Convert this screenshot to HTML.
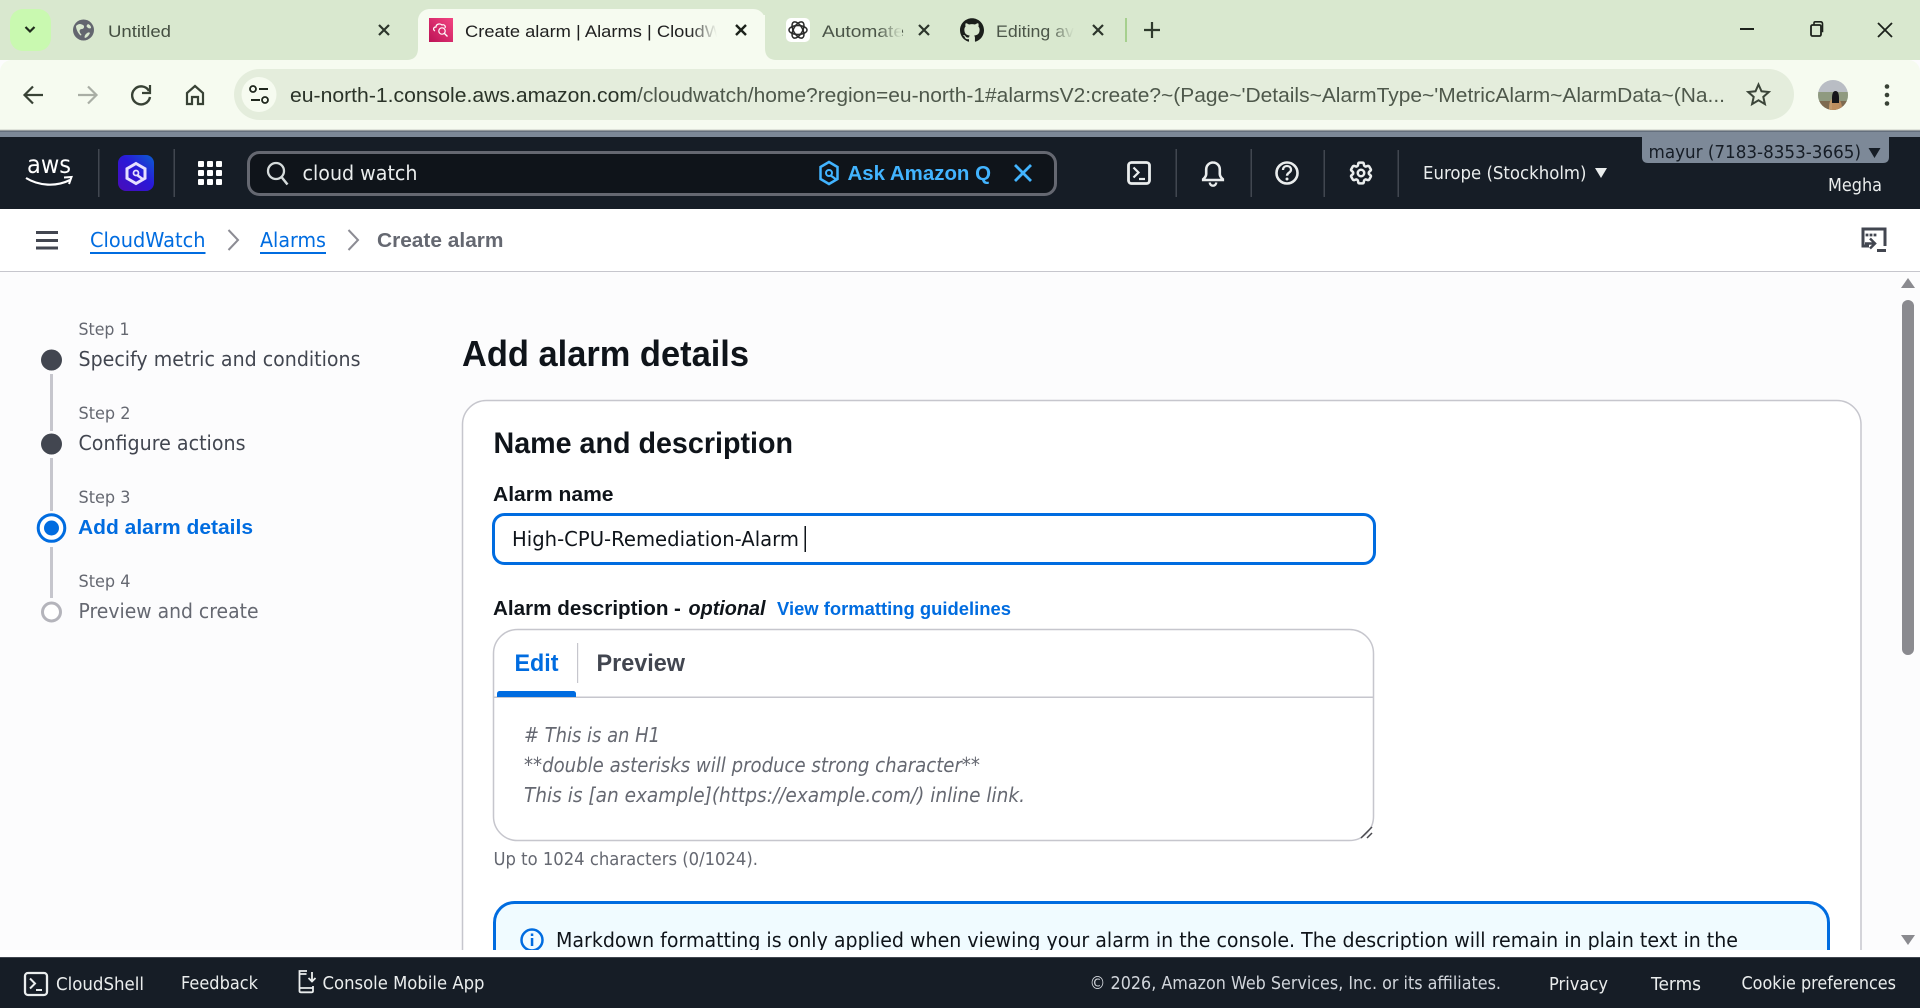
<!DOCTYPE html>
<html lang="en">
<head>
<meta charset="utf-8">
<title>Create alarm | Alarms | CloudWatch</title>
<style>
html,body{margin:0;padding:0;width:1920px;height:1008px;overflow:hidden;background:#fcfcfd}
svg{display:block}
text{white-space:pre}
.c{font-family:"Liberation Sans",sans-serif}
.a{font-family:"DejaVu Sans","Liberation Sans",sans-serif;fill:currentColor;-webkit-text-stroke:.22px}
.b{font-family:"Liberation Sans",sans-serif;font-weight:700}
</style>
</head>
<body>
<svg width="1920" height="1008" viewBox="0 0 1920 1008" xmlns="http://www.w3.org/2000/svg">
<defs>
<linearGradient id="fa" x1="0" x2="1" y1="0" y2="0"><stop offset="0" stop-color="#f6fbf0" stop-opacity="0"/><stop offset="1" stop-color="#f6fbf0"/></linearGradient>
<linearGradient id="fb" x1="0" x2="1" y1="0" y2="0"><stop offset="0" stop-color="#d9e8cf" stop-opacity="0"/><stop offset="1" stop-color="#d9e8cf"/></linearGradient>
<linearGradient id="pink" x1="1" x2="0" y1="0" y2="1"><stop offset="0" stop-color="#f34482"/><stop offset="1" stop-color="#bc1356"/></linearGradient>
<linearGradient id="qg" x1="1" x2="0" y1="0" y2="1"><stop offset="0" stop-color="#0a5fd0"/><stop offset=".45" stop-color="#2a18d8"/><stop offset="1" stop-color="#4a0cb8"/></linearGradient>
<clipPath id="avc"><circle cx="1833" cy="95" r="15"/></clipPath>
<clipPath id="main"><rect x="0" y="272" width="1920" height="678"/></clipPath>
</defs>

<!-- Tab strip -->
<rect x="0" y="0" width="1920" height="60" fill="#d9e8cf"/>
<rect x="10" y="9" width="41" height="42" rx="13" fill="#c9f9b0"/>
<path d="M25.5 27l4.5 4.5 4.5-4.5" fill="none" stroke="#1f2a1c" stroke-width="2.2"/>

<!-- Tab 1 -->
<circle cx="83.5" cy="30" r="10.5" fill="#63666f"/>
<path d="M76 26c3-3 5-2 7-1 2 1 1 4-1 4-3 0-3 3-1 5 1 1 0 2-1 1-2-2-4-6-4-9zM88 24c2 1 3 2 3 4-2 1-3 0-4-1-1-1 0-2 1-3zM86 34c2-2 3-2 4-1-1 2-2 4-5 5-1-1 0-3 1-4z" fill="#d9e8cf"/>
<text class="c" x="108" y="37" font-size="17" fill="#454f42" textLength="63" lengthAdjust="spacingAndGlyphs">Untitled</text>
<path d="M379 25l10 10M389 25l-10 10" stroke="#2c352b" stroke-width="2.2"/>

<!-- Active tab -->
<path d="M406 60c8 0 12-4 12-12V21c0-7 5-12 12-12h323c7 0 12 5 12 12v27c0 8 4 12 12 12z" fill="#f6fbf0"/>
<rect x="429" y="18" width="24" height="24" fill="url(#pink)"/>
<path d="M435 31c-2-1-2-4 1-4 0-3 4-4 6-2 2-1 4 1 3 3" fill="none" stroke="#fff" stroke-width="1.2"/>
<circle cx="442" cy="31" r="3.2" fill="none" stroke="#fff" stroke-width="1.2"/><path d="M444.5 33.5l3 3" stroke="#fff" stroke-width="1.3"/>
<text class="c" x="465" y="37" font-size="17" fill="#1f1f1f" textLength="291" lengthAdjust="spacingAndGlyphs">Create alarm | Alarms | CloudWatch</text>
<rect x="690" y="15" width="27" height="30" fill="url(#fa)"/>
<rect x="717" y="15" width="48" height="30" fill="#f6fbf0"/>
<path d="M736 25l10 10M746 25l-10 10" stroke="#1c211b" stroke-width="2.4"/>

<!-- Automate tab -->
<rect x="786" y="18" width="24" height="24" rx="5" fill="#fff"/>
<g fill="none" stroke="#2b2b2b" stroke-width="1.5">
<ellipse cx="798" cy="30" rx="9" ry="4.500"/><ellipse cx="798" cy="30" rx="9" ry="4.500" transform="rotate(60 798 30)"/><ellipse cx="798" cy="30" rx="9" ry="4.500" transform="rotate(-60 798 30)"/>
</g>
<text class="c" x="822" y="37" font-size="17" fill="#4b5548" textLength="82" lengthAdjust="spacingAndGlyphs">Automate</text>
<rect x="878" y="15" width="24" height="30" fill="url(#fb)"/>
<path d="M919 25l10 10M929 25l-10 10" stroke="#2c352b" stroke-width="2.2"/>

<!-- GitHub tab -->
<path transform="translate(960 18)" fill="#1b1f1b" d="M12 .297c-6.63 0-12 5.373-12 12 0 5.303 3.438 9.8 8.205 11.385.6.113.82-.258.82-.577 0-.285-.01-1.04-.015-2.04-3.338.724-4.042-1.61-4.042-1.61C4.422 18.07 3.633 17.7 3.633 17.7c-1.087-.744.084-.729.084-.729 1.205.084 1.838 1.236 1.838 1.236 1.07 1.835 2.809 1.305 3.495.998.108-.776.417-1.305.76-1.605-2.665-.3-5.466-1.332-5.466-5.93 0-1.31.465-2.38 1.235-3.22-.135-.303-.54-1.523.105-3.176 0 0 1.005-.322 3.3 1.23.96-.267 1.98-.399 3-.405 1.02.006 2.04.138 3 .405 2.28-1.552 3.285-1.23 3.285-1.23.645 1.653.24 2.873.12 3.176.765.84 1.23 1.91 1.23 3.22 0 4.61-2.805 5.625-5.475 5.92.42.36.81 1.096.81 2.22 0 1.606-.015 2.896-.015 3.286 0 .315.21.69.825.57C20.565 22.092 24 17.592 24 12.297c0-6.627-5.373-12-12-12"/>
<text class="c" x="996" y="37" font-size="17" fill="#4b5548" textLength="78" lengthAdjust="spacingAndGlyphs">Editing av</text>
<rect x="1050" y="15" width="24" height="30" fill="url(#fb)"/>
<rect x="1074" y="15" width="16" height="30" fill="#d9e8cf"/>
<path d="M1093 25l10 10M1103 25l-10 10" stroke="#2c352b" stroke-width="2.2"/>
<rect x="1125" y="18" width="2" height="24" fill="#a6d08e"/>
<path d="M1152 22v16M1144 30h16" stroke="#2f3a2d" stroke-width="2.2"/>

<!-- Window controls -->
<path d="M1740 29h14" stroke="#1c211b" stroke-width="2"/>
<rect x="1811" y="25" width="10" height="11" rx="1.5" fill="none" stroke="#1c211b" stroke-width="1.8"/>
<path d="M1814 25v-2c0-.8.6-1.2 1.2-1.2h5.3c1.2 0 2 .8 2 2v8.5" fill="none" stroke="#1c211b" stroke-width="1.6"/>
<path d="M1878 23l14 14M1892 23l-14 14" stroke="#1c211b" stroke-width="1.8"/>

<!-- Toolbar -->
<path d="M0 130V72c0-7 5-12 12-12h1896c7 0 12 5 12 12v58z" fill="#f6fbf0"/>
<rect x="0" y="129" width="1920" height="2" fill="#dfe3da"/>
<path d="M43 95H25M33 86.5L24.5 95l8.500 8.500" fill="none" stroke="#384235" stroke-width="2.2"/>
<path d="M78 95h18M88 86.500l8.500 8.500-8.500 8.500" fill="none" stroke="#a9aea5" stroke-width="2.2"/>
<path d="M149 91a9 9 0 1 0 1 6" fill="none" stroke="#384235" stroke-width="2.4"/><path d="M150 85v8h-8" fill="none" stroke="#384235" stroke-width="2.2"/>
<path d="M187 104V93l8-7 8 7v11h-5v-7h-6v7z" fill="none" stroke="#384235" stroke-width="2.2"/>

<!-- Omnibox -->
<rect x="234" y="69" width="1560" height="51" rx="25.500" fill="#e4eddc"/>
<circle cx="259" cy="94.500" r="17.500" fill="#f6fbf0"/>
<circle cx="253" cy="89" r="3" fill="none" stroke="#20281e" stroke-width="1.800"/><path d="M259 89h9M251 100h9" stroke="#20281e" stroke-width="2"/><circle cx="265" cy="100" r="3" fill="none" stroke="#20281e" stroke-width="1.800"/>
<text class="c" x="290" y="102" font-size="20.500" fill="#2a3328" textLength="347" lengthAdjust="spacingAndGlyphs">eu-north-1.console.aws.amazon.com</text>
<text class="c" x="637" y="102" font-size="20.500" fill="#4e584b" textLength="1088" lengthAdjust="spacingAndGlyphs">/cloudwatch/home?region=eu-north-1#alarmsV2:create?~(Page~'Details~AlarmType~'MetricAlarm~AlarmData~(Na...</text>
<path d="M1758.500 84.500l3 6.800 7.300.7-5.500 4.900 1.600 7.200-6.400-3.800-6.400 3.800 1.600-7.200-5.500-4.900 7.300-.7z" fill="none" stroke="#3b4539" stroke-width="2"/>
<g clip-path="url(#avc)">
<rect x="1818" y="80" width="30" height="30" fill="#b9bdc4"/>
<rect x="1818" y="92" width="30" height="10" fill="#8f9a80"/>
<rect x="1818" y="101" width="30" height="9" fill="#7d6a50"/>
<path d="M1829 110c0-7 1-10 3-11l1 11z" fill="#c59a6c"/><path d="M1839 110v-10c2 1 3 4 3 10z" fill="#b88a60"/>
<path d="M1832 104V98c0-4 1-7 3.500-7s3.500 3 3.500 7v6z" fill="#15151a"/>
<rect x="1832" y="103" width="7" height="7" fill="#c08e5e"/>
</g>
<circle cx="1887" cy="86.500" r="2.300" fill="#384235"/><circle cx="1887" cy="95" r="2.300" fill="#384235"/><circle cx="1887" cy="103.500" r="2.300" fill="#384235"/>

<!-- AWS nav -->
<rect x="0" y="131" width="1920" height="78" fill="#161d26"/>
<rect x="0" y="131" width="1920" height="6" fill="#7d8998"/>
<rect x="0" y="130.500" width="1920" height="1" fill="#4c5562"/>
<text class="a" x="27" y="173" font-size="25" color="#fff" textLength="44" lengthAdjust="spacingAndGlyphs">aws</text>
<path d="M26 178c13 8 30 9 44 2" fill="none" stroke="#fff" stroke-width="2.200"/><path d="M64 177.500l7.500-.5-2.500 7" fill="none" stroke="#fff" stroke-width="2"/>
<rect x="98" y="149" width="1.500" height="48" fill="#414750"/>
<rect x="118" y="155" width="36" height="36" rx="8" fill="url(#qg)"/>
<path d="M136 163.500l9 5.200v9.600l-9 5.200-9-5.200v-9.600z" fill="none" stroke="#e6e0ff" stroke-width="3"/><circle cx="136" cy="173" r="2.500" fill="none" stroke="#e6e0ff" stroke-width="1.800"/><path d="M137 175l7 5" stroke="#e6e0ff" stroke-width="2.500"/>
<rect x="173.500" y="149" width="1.500" height="48" fill="#414750"/>
<g fill="#fff">
<rect x="198" y="161" width="6" height="6" rx="1"/><rect x="207" y="161" width="6" height="6" rx="1"/><rect x="216" y="161" width="6" height="6" rx="1"/>
<rect x="198" y="170" width="6" height="6" rx="1"/><rect x="207" y="170" width="6" height="6" rx="1"/><rect x="216" y="170" width="6" height="6" rx="1"/>
<rect x="198" y="179" width="6" height="6" rx="1"/><rect x="207" y="179" width="6" height="6" rx="1"/><rect x="216" y="179" width="6" height="6" rx="1"/>
</g>
<rect x="248.500" y="152.500" width="807" height="42" rx="11" fill="#0f141a" stroke="#656871" stroke-width="3"/>
<circle cx="276" cy="171" r="8" fill="none" stroke="#d5dbdb" stroke-width="2.300"/><path d="M281.500 177l6 7.500" stroke="#d5dbdb" stroke-width="2.500"/>
<text class="a" x="302.500" y="180" font-size="20" color="#eaeded" textLength="115" lengthAdjust="spacingAndGlyphs">cloud watch</text>
<path d="M829 162l8.500 5v12l-8.500 5-8.500-5v-12z" fill="none" stroke="#42b4ff" stroke-width="2.500"/><circle cx="829" cy="173" r="3" fill="none" stroke="#42b4ff" stroke-width="2"/><path d="M830 175l7 5" stroke="#42b4ff" stroke-width="2.300"/>
<text class="b" x="847.500" y="180" font-size="20.500" fill="#42b4ff" textLength="143.500" lengthAdjust="spacingAndGlyphs">Ask Amazon Q</text>
<path d="M1015 165l16 16M1031 165l-16 16" stroke="#42b4ff" stroke-width="2.800"/>

<rect x="1128.500" y="162.500" width="21" height="21" rx="3" fill="none" stroke="#eaeded" stroke-width="2.800"/>
<path d="M1133.500 167.500l5 5-5 5" fill="none" stroke="#eaeded" stroke-width="2.200"/><path d="M1139 179h6" stroke="#eaeded" stroke-width="2.200"/>
<rect x="1175.500" y="149" width="1.500" height="48" fill="#414750"/>
<path d="M1213 162.500a6.800 6.800 0 0 0-6.800 6.800v4.700c0 2.200-1.400 3.800-3 5.200v.8h19.600v-.8c-1.600-1.400-3-3-3-5.200v-4.700a6.800 6.800 0 0 0-6.800-6.800z" fill="none" stroke="#eaeded" stroke-width="2.600"/>
<path d="M1209.800 182.500a3.200 3.200 0 0 0 6.400 0" fill="none" stroke="#eaeded" stroke-width="2.400"/>
<rect x="1250.500" y="149" width="1.500" height="48" fill="#414750"/>
<circle cx="1287" cy="173" r="10.500" fill="none" stroke="#eaeded" stroke-width="2.600"/>
<path d="M1283 170c0-2.500 1.800-4 4-4s4 1.500 4 3.700c0 3-4 3-4 6" fill="none" stroke="#eaeded" stroke-width="2.300"/><circle cx="1287" cy="179" r="1.500" fill="#eaeded"/>
<rect x="1323.500" y="150" width="1.500" height="47" fill="#414750"/>
<g transform="translate(1347.200 159.200) scale(1.150)" fill="none" stroke="#eaeded" stroke-width="2.200">
<path d="M9.594 3.940c.09-.542.56-.94 1.110-.94h2.593c.55 0 1.020.398 1.110.94l.213 1.281c.063.374.313.686.645.870.074.040.147.083.22.127.325.196.72.257 1.075.124l1.217-.456a1.125 1.125 0 011.370.49l1.296 2.247a1.125 1.125 0 01-.26 1.431l-1.003.827c-.293.241-.438.613-.43.992a7.723 7.723 0 010 .255c-.008.378.137.75.43.991l1.004.827c.424.35.534.955.26 1.43l-1.298 2.247a1.125 1.125 0 01-1.369.491l-1.217-.456c-.355-.133-.75-.072-1.076.124a6.470 6.470 0 01-.22.128c-.331.183-.581.495-.644.869l-.213 1.281c-.09.543-.56.94-1.110.94h-2.594c-.55 0-1.019-.398-1.110-.94l-.213-1.281c-.062-.374-.312-.686-.644-.87a6.520 6.520 0 01-.22-.127c-.325-.196-.72-.257-1.076-.124l-1.217.456a1.125 1.125 0 01-1.369-.49l-1.297-2.247a1.125 1.125 0 01.26-1.431l1.004-.827c.292-.24.437-.613.43-.991a6.932 6.932 0 010-.255c.007-.38-.138-.751-.43-.992l-1.004-.827a1.125 1.125 0 01-.26-1.430l1.297-2.247a1.125 1.125 0 011.370-.491l1.216.456c.356.133.751.072 1.076-.124.072-.044.146-.086.22-.128.332-.183.582-.495.644-.869l.214-1.280z"/>
<circle cx="12" cy="12" r="2.800"/>
</g>
<rect x="1397.500" y="150" width="1.500" height="47" fill="#414750"/>
<text class="a" x="1423" y="179" font-size="18" color="#eaeded" textLength="163.500" lengthAdjust="spacingAndGlyphs">Europe (Stockholm)</text>
<path d="M1595 168h12l-6 10z" fill="#eaeded"/>
<path d="M1642 137h247v20c0 4-2 6-6 6h-235c-4 0-6-2-6-6z" fill="#7d8998"/>
<text class="a" x="1648.500" y="158" font-size="18" color="#161d26" style="-webkit-text-stroke:.5px" textLength="212.500" lengthAdjust="spacingAndGlyphs">mayur (7183-8353-3665)</text>
<path d="M1868.500 148h12l-6 10z" fill="#161d26"/>
<text class="a" x="1828" y="191" font-size="18" color="#eaeded" textLength="54" lengthAdjust="spacingAndGlyphs">Megha</text>

<!-- Breadcrumb bar -->
<rect x="0" y="209" width="1920" height="62" fill="#fff"/>
<rect x="0" y="271" width="1920" height="1.500" fill="#c6c6cd"/>
<path d="M36 232.500h22M36 240.500h22M36 248h22" stroke="#424650" stroke-width="3"/>
<text class="a" x="90" y="247" font-size="20" color="#006ce0" textLength="115.500" lengthAdjust="spacingAndGlyphs">CloudWatch</text>
<rect x="90" y="252" width="115.500" height="2" fill="#006ce0"/>
<path d="M228.500 230l9.500 10-9.500 10" fill="none" stroke="#8c8c94" stroke-width="2"/>
<text class="a" x="260" y="247" font-size="20" color="#006ce0" textLength="66" lengthAdjust="spacingAndGlyphs">Alarms</text>
<rect x="260" y="252" width="66" height="2" fill="#006ce0"/>
<path d="M348.500 230l9.500 10-9.500 10" fill="none" stroke="#8c8c94" stroke-width="2"/>
<text class="b" x="377" y="247" font-size="20" fill="#656871" textLength="126.500" lengthAdjust="spacingAndGlyphs">Create alarm</text>
<path d="M1885 246v-17h-22v17h6" fill="none" stroke="#424650" stroke-width="3"/>
<path d="M1866 234h2v2h-2zM1870 234h2v2h-2zM1874 234h2v2h-2z" fill="#424650" stroke="#424650" stroke-width=".8"/>
<path d="M1865 243.500h9M1870 238.500l5 5-5 5" fill="none" stroke="#424650" stroke-width="2.500"/>
<rect x="1877" y="249" width="9" height="3" fill="#424650"/>

<!-- Main content -->
<g clip-path="url(#main)">
<rect x="0" y="272" width="1920" height="678" fill="#fcfcfd"/>

<!-- Steps -->
<text class="a" x="78.500" y="335" font-size="17" color="#656871" textLength="51" lengthAdjust="spacingAndGlyphs">Step 1</text>
<text class="a" x="78.500" y="366" font-size="20" color="#424650" textLength="282" lengthAdjust="spacingAndGlyphs">Specify metric and conditions</text>
<circle cx="51.500" cy="360" r="10.500" fill="#424650"/>
<rect x="50" y="374" width="3" height="57" fill="#c6c6cd"/>
<text class="a" x="78.500" y="419" font-size="17" color="#656871" textLength="52" lengthAdjust="spacingAndGlyphs">Step 2</text>
<text class="a" x="78.500" y="450" font-size="20" color="#424650" textLength="167" lengthAdjust="spacingAndGlyphs">Configure actions</text>
<circle cx="51.500" cy="444" r="10.500" fill="#424650"/>
<rect x="50" y="458" width="3" height="53" fill="#c6c6cd"/>
<text class="a" x="78.500" y="503" font-size="17" color="#656871" textLength="52" lengthAdjust="spacingAndGlyphs">Step 3</text>
<text class="b" x="78" y="534" font-size="20.500" fill="#006ce0" textLength="175" lengthAdjust="spacingAndGlyphs">Add alarm details</text>
<circle cx="51.500" cy="528" r="13.300" fill="#fff" stroke="#006ce0" stroke-width="3"/>
<circle cx="51.500" cy="528" r="7.500" fill="#006ce0"/>
<rect x="50" y="547" width="3" height="51" fill="#c6c6cd"/>
<text class="a" x="78.500" y="587" font-size="17" color="#656871" textLength="52" lengthAdjust="spacingAndGlyphs">Step 4</text>
<text class="a" x="78.500" y="618" font-size="20" color="#656871" textLength="180" lengthAdjust="spacingAndGlyphs">Preview and create</text>
<circle cx="51.500" cy="612" r="9" fill="#fff" stroke="#b4b4bb" stroke-width="3"/>

<!-- Title -->
<text class="b" x="462" y="366" font-size="36" fill="#0f141a" textLength="287" lengthAdjust="spacingAndGlyphs">Add alarm details</text>

<!-- Card -->
<path d="M462.500 950V424.500a24 24 0 0 1 24-24H1837a24 24 0 0 1 24 24V950" fill="#fff" stroke="#c6c6cd" stroke-width="1.500"/>
<text class="b" x="493.500" y="453" font-size="29.500" fill="#0f141a" textLength="299.500" lengthAdjust="spacingAndGlyphs">Name and description</text>
<text class="b" x="493" y="501" font-size="20.500" fill="#0f141a" textLength="120.500" lengthAdjust="spacingAndGlyphs">Alarm name</text>
<rect x="493.500" y="514.500" width="881" height="49" rx="11" fill="#fff" stroke="#006ce0" stroke-width="3"/>
<text class="a" x="512" y="546" font-size="20" color="#0f141a" textLength="287" lengthAdjust="spacingAndGlyphs">High-CPU-Remediation-Alarm</text>
<rect x="804.500" y="526" width="1.500" height="26" fill="#0f141a"/>
<text class="b" x="493" y="615" font-size="20.500" fill="#0f141a" textLength="175.500" lengthAdjust="spacingAndGlyphs">Alarm description</text>
<text class="b" x="674" y="615" font-size="20.500" fill="#0f141a">-</text>
<text class="b" x="688.500" y="615" font-size="20.500" font-style="italic" fill="#0f141a" textLength="77" lengthAdjust="spacingAndGlyphs">optional</text>
<text class="b" x="777" y="615" font-size="18" fill="#006ce0" textLength="234" lengthAdjust="spacingAndGlyphs">View formatting guidelines</text>

<!-- Textarea group -->
<rect x="493.500" y="629.500" width="880" height="211" rx="24" fill="#fff" stroke="#c6c6cd" stroke-width="1.500"/>
<rect x="494" y="696.500" width="879" height="1.500" fill="#c6c6cd"/>
<text class="b" x="514.500" y="671" font-size="24" fill="#006ce0" textLength="44" lengthAdjust="spacingAndGlyphs">Edit</text>
<rect x="577" y="643" width="1.200" height="40" fill="#c6c6cd"/>
<text class="b" x="596.500" y="671" font-size="24" fill="#424650" textLength="88.500" lengthAdjust="spacingAndGlyphs">Preview</text>
<path d="M497 697v-3c0-2 1-3 3-3h73c2 0 3 1 3 3v3z" fill="#006ce0"/>
<g font-style="italic" font-size="20">
<text class="a" x="524" y="742" color="#656871" textLength="136" lengthAdjust="spacingAndGlyphs"># This is an H1</text>
<text class="a" x="524" y="772" color="#656871" textLength="456" lengthAdjust="spacingAndGlyphs">**double asterisks will produce strong character**</text>
<text class="a" x="524" y="802" color="#656871" textLength="501" lengthAdjust="spacingAndGlyphs">This is [an example](https://example.com/) inline link.</text>
</g>
<path d="M1361 838l11-11M1367 838l5-5" stroke="#4a4a4f" stroke-width="1.500"/>
<text class="a" x="493.500" y="865" font-size="18" color="#656871" textLength="264.500" lengthAdjust="spacingAndGlyphs">Up to 1024 characters (0/1024).</text>

<!-- Info alert -->
<path d="M494.500 950V922.500a20 20 0 0 1 20-20H1808.500a20 20 0 0 1 20 20V950" fill="#f0fbff" stroke="#006ce0" stroke-width="3"/>
<circle cx="532" cy="940" r="10.500" fill="none" stroke="#006ce0" stroke-width="2.500"/>
<rect x="530.800" y="938" width="2.500" height="8" fill="#006ce0"/><rect x="530.800" y="933.500" width="2.500" height="2.500" fill="#006ce0"/>
<text class="a" x="556" y="947" font-size="20" color="#0f141a" textLength="1182" lengthAdjust="spacingAndGlyphs">Markdown formatting is only applied when viewing your alarm in the console. The description will remain in plain text in the</text>
</g>

<!-- Scrollbar -->
<rect x="1896" y="272" width="24" height="678" fill="#fcfcfd"/>
<rect x="1902" y="300" width="12" height="355" rx="6" fill="#8a8a8f"/>
<path d="M1908 278l7 10h-14z" fill="#8a8a8f"/>
<path d="M1908 945l-7-10h14z" fill="#8a8a8f"/>

<!-- Footer strip -->
<rect x="0" y="950" width="1920" height="7" fill="#fff"/>
<rect x="0" y="957" width="1920" height="51" fill="#161d26"/>
<rect x="0" y="957" width="1920" height="1" fill="#414750"/>
<rect x="25" y="973" width="22" height="22" rx="3" fill="none" stroke="#eaeded" stroke-width="2.300"/>
<path d="M30 978.500l5 5-5 5" fill="none" stroke="#eaeded" stroke-width="2"/><path d="M36 990h6" stroke="#eaeded" stroke-width="2"/>
<text class="a" x="56" y="990" font-size="18" color="#eaeded" textLength="88" lengthAdjust="spacingAndGlyphs">CloudShell</text>
<text class="a" x="181" y="989" font-size="18" color="#eaeded" textLength="77" lengthAdjust="spacingAndGlyphs">Feedback</text>
<path d="M307 971h-7.500v20c0 .8.500 1.300 1.300 1.300h11c.7 0 1.200-.5 1.200-1.300v-5M299.500 974h7M299.500 988h14" fill="none" stroke="#eaeded" stroke-width="1.800"/>
<path d="M312 972v9M308.500 978l3.500 3.500 3.500-3.500" fill="none" stroke="#eaeded" stroke-width="1.800"/>
<text class="a" x="322.500" y="989" font-size="18" color="#eaeded" textLength="162" lengthAdjust="spacingAndGlyphs">Console Mobile App</text>
<text class="a" x="1089.500" y="989" font-size="18" color="#d1d5db" textLength="411.500" lengthAdjust="spacingAndGlyphs">© 2026, Amazon Web Services, Inc. or its affiliates.</text>
<text class="a" x="1549" y="990" font-size="18" color="#eaeded" textLength="59" lengthAdjust="spacingAndGlyphs">Privacy</text>
<text class="a" x="1651" y="990" font-size="18" color="#eaeded" textLength="50" lengthAdjust="spacingAndGlyphs">Terms</text>
<text class="a" x="1741.500" y="989" font-size="18" color="#eaeded" textLength="154.500" lengthAdjust="spacingAndGlyphs">Cookie preferences</text>
</svg>
</body>
</html>
